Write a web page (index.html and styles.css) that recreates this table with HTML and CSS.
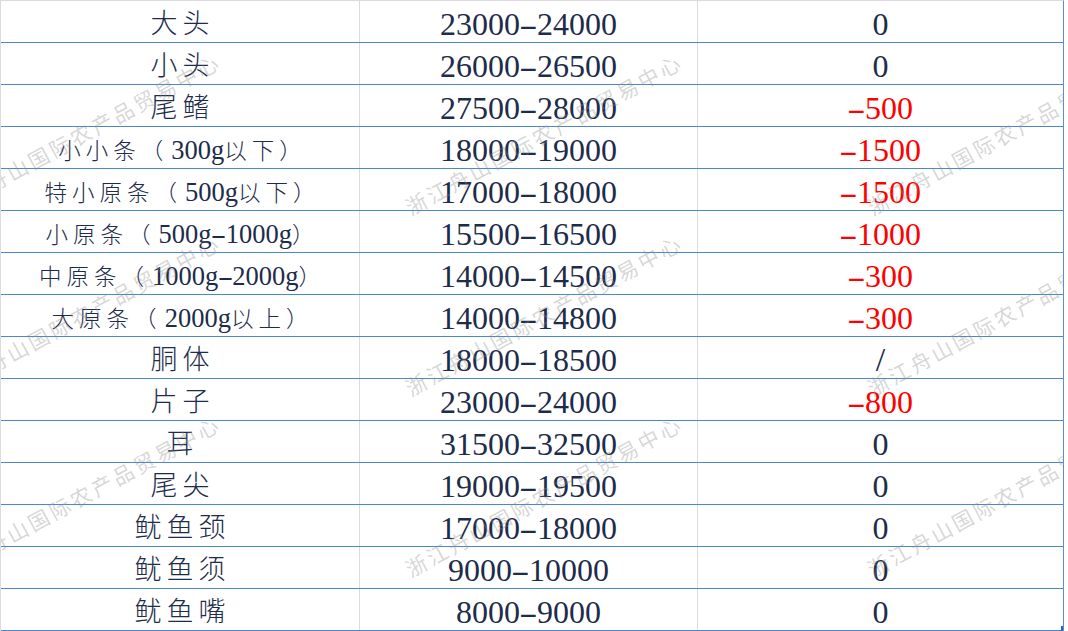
FILE: index.html
```html
<!DOCTYPE html>
<html lang="zh-CN">
<head>
<meta charset="utf-8">
<title>价格表</title>
<link rel="stylesheet" href="styles.css">
</head>
<body>
<div class="sheet">
  <div class="row"><div class="c c1">大头</div><div class="c c2">23000<span class="d">-</span>24000</div><div class="c c3">0</div></div>
  <div class="row"><div class="c c1">小头</div><div class="c c2">26000<span class="d">-</span>26500</div><div class="c c3">0</div></div>
  <div class="row"><div class="c c1">尾鳍</div><div class="c c2">27500<span class="d">-</span>28000</div><div class="c c3 neg"><span class="d">-</span>500</div></div>
  <div class="row"><div class="c c1 long">小小条<span class="p">（</span><span class="n">300g</span>以下）</div><div class="c c2">18000<span class="d">-</span>19000</div><div class="c c3 neg"><span class="d">-</span>1500</div></div>
  <div class="row"><div class="c c1 long">特小原条<span class="p">（</span><span class="n">500g</span>以下）</div><div class="c c2">17000<span class="d">-</span>18000</div><div class="c c3 neg"><span class="d">-</span>1500</div></div>
  <div class="row"><div class="c c1 long">小原条<span class="p">（</span><span class="n">500g<span class="d">-</span>1000g</span>）</div><div class="c c2">15500<span class="d">-</span>16500</div><div class="c c3 neg"><span class="d">-</span>1000</div></div>
  <div class="row"><div class="c c1 long">中原条<span class="p">（</span><span class="n">1000g<span class="d">-</span>2000g</span>）</div><div class="c c2">14000<span class="d">-</span>14500</div><div class="c c3 neg"><span class="d">-</span>300</div></div>
  <div class="row"><div class="c c1 long">大原条<span class="p">（</span><span class="n">2000g</span>以上）</div><div class="c c2">14000<span class="d">-</span>14800</div><div class="c c3 neg"><span class="d">-</span>300</div></div>
  <div class="row"><div class="c c1">胴体</div><div class="c c2">18000<span class="d">-</span>18500</div><div class="c c3 slash">/</div></div>
  <div class="row"><div class="c c1">片子</div><div class="c c2">23000<span class="d">-</span>24000</div><div class="c c3 neg"><span class="d">-</span>800</div></div>
  <div class="row"><div class="c c1">耳</div><div class="c c2">31500<span class="d">-</span>32500</div><div class="c c3">0</div></div>
  <div class="row"><div class="c c1">尾尖</div><div class="c c2">19000<span class="d">-</span>19500</div><div class="c c3">0</div></div>
  <div class="row"><div class="c c1">鱿鱼颈</div><div class="c c2">17000<span class="d">-</span>18000</div><div class="c c3">0</div></div>
  <div class="row"><div class="c c1">鱿鱼须</div><div class="c c2">9000<span class="d">-</span>10000</div><div class="c c3">0</div></div>
  <div class="row"><div class="c c1">鱿鱼嘴</div><div class="c c2">8000<span class="d">-</span>9000</div><div class="c c3">0</div></div>

  <div class="wm w1">浙江舟山国际农产品贸易中心</div>
  <div class="wm w2">浙江舟山国际农产品贸易中心</div>
  <div class="wm w3">浙江舟山国际农产品贸易中心</div>
  <div class="wm w4">浙江舟山国际农产品贸易中心</div>
  <div class="wm w5">浙江舟山国际农产品贸易中心</div>
  <div class="wm w6">浙江舟山国际农产品贸易中心</div>
  <div class="wm w7">浙江舟山国际农产品贸易中心</div>
  <div class="wm w8">浙江舟山国际农产品贸易中心</div>
  <div class="wm w9">浙江舟山国际农产品贸易中心</div>

  <div class="handle"></div>
</div>
</body>
</html>
```

FILE: styles.css
```css
html, body {
  margin: 0;
  padding: 0;
  background: #ffffff;
}

.sheet {
  position: relative;
  width: 1062px;
  border-left: 1px solid #dcdcdc;
  border-top: 1px solid #dcdcdc;
  border-right: 1px solid #5a8fd6;
  overflow: hidden;
  height: 630px;
}

.row {
  display: grid;
  grid-template-columns: 359px 338px 365px;
  height: 41px;
  border-bottom: 1px solid #4a86d6;
}

.c {
  box-sizing: border-box;
  height: 41px;
  padding-top: 5px;
  line-height: 36px;
  text-align: center;
  white-space: nowrap;
  font-family: "Liberation Serif", "Noto Sans CJK SC", serif;
  color: #1d2c4a;
}

.c1, .c2 {
  border-right: 1px solid #dcdcdc;
}

.c1 {
  font-size: 27px;
  font-weight: 300;
  letter-spacing: 5px;
  padding-left: 5px;
}

.c1.long {
  font-size: 22.5px;
  letter-spacing: 5px;
  padding-left: 5px;
}

.c1 .p {
  letter-spacing: 8px;
}

.c1 .n {
  font-size: 26.5px;
  letter-spacing: 0;
  font-weight: 400;
}

.c2, .c3 {
  font-size: 32px;
}

.d {
  display: inline-block;
  margin: 0 0.1em;
  transform: scaleX(1.75);
}

.neg {
  color: #ff0000;
}

.slash {
  font-size: 34px;
}

.wm {
  position: absolute;
  font-family: "Noto Sans CJK SC", sans-serif;
  font-size: 21px;
  line-height: 21px;
  letter-spacing: 3px;
  white-space: nowrap;
  color: rgba(140, 140, 140, 0.36);
  transform-origin: 0 19px;
  transform: rotate(-28.5deg);
  pointer-events: none;
}

.w1 { left: -52px; top: 196px; }
.w2 { left: 410px; top: 196px; }
.w3 { left: 872px; top: 196px; }
.w4 { left: -52px; top: 377px; }
.w5 { left: 410px; top: 377px; }
.w6 { left: 872px; top: 377px; }
.w7 { left: -52px; top: 558px; }
.w8 { left: 410px; top: 558px; }
.w9 { left: 872px; top: 558px; }

.handle {
  position: absolute;
  right: -4px;
  bottom: -1px;
  width: 6px;
  height: 6px;
  background: #3a5bc4;
}
```
